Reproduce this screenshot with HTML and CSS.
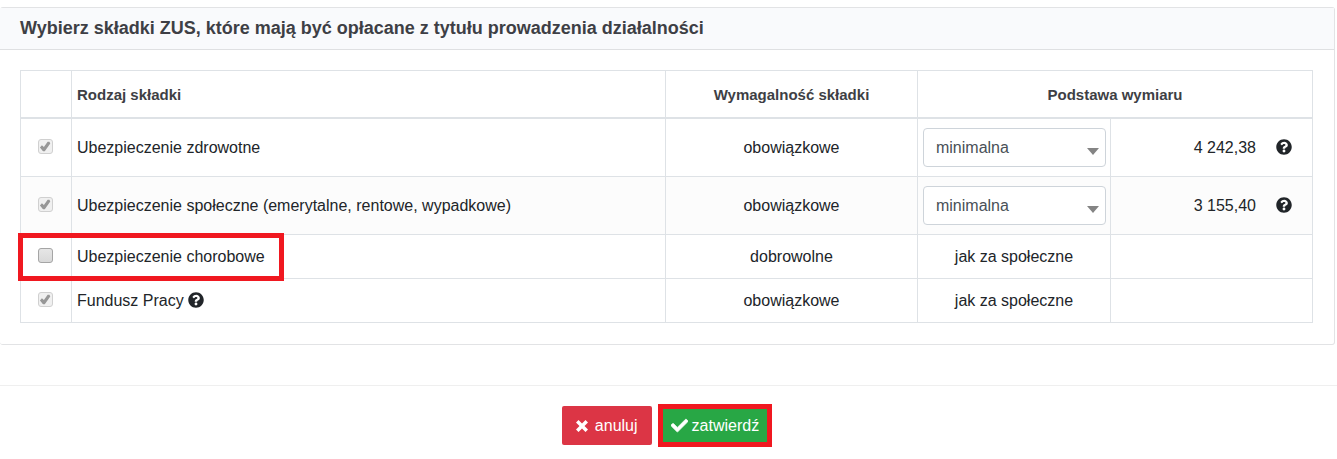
FILE: index.html
```
<!DOCTYPE html>
<html lang="pl">
<head>
<meta charset="utf-8">
<title>Składki ZUS</title>
<link rel="stylesheet" href="styles.css">
</head>
<body>
<svg class="sprite" aria-hidden="true">
  <symbol id="help" viewBox="0 0 512 512"><path d="M504 256c0 136.997-111.043 248-248 248S8 392.997 8 256C8 119.083 119.043 8 256 8s248 111.083 248 248zM262.655 90c-54.497 0-89.255 22.957-116.549 63.758-3.536 5.286-2.353 12.415 2.715 16.258l34.699 26.31c5.205 3.947 12.621 3.008 16.665-2.122 17.864-22.658 30.113-35.797 57.303-35.797 20.429 0 45.698 13.148 45.698 32.958 0 14.976-12.363 22.667-32.534 33.976C247.128 238.528 216 254.941 216 296v4c0 6.627 5.373 12 12 12h56c6.627 0 12-5.373 12-12v-1.333c0-28.462 83.186-29.647 83.186-106.667 0-58.002-60.165-102-116.531-102zM256 338c-25.365 0-46 20.635-46 46 0 25.364 20.635 46 46 46s46-20.636 46-46c0-25.364-20.635-46-46-46z"/></symbol>
</svg>
<form>
  <section class="card">
    <h1 class="card-header">Wybierz składki ZUS, które mają być opłacane z tytułu prowadzenia działalności</h1>
    <div class="card-body">
      <table class="table">
        <colgroup>
          <col class="col-check"><col><col class="col-due"><col class="col-base"><col class="col-amount">
        </colgroup>
        <thead>
          <tr>
            <th></th>
            <th class="left">Rodzaj składki</th>
            <th>Wymagalność składki</th>
            <th colspan="2">Podstawa wymiaru</th>
          </tr>
        </thead>
        <tbody>
          <tr>
            <td class="check-cell"><input class="check" type="checkbox" id="health" checked disabled></td>
            <td class="left"><label for="health">Ubezpieczenie zdrowotne</label></td>
            <td>obowiązkowe</td>
            <td><select class="select" aria-label="Podstawa wymiaru: zdrowotne"><option>minimalna</option></select></td>
            <td class="amount"><span>4 242,38</span><svg class="help" role="img" aria-label="Pomoc"><use href="#help"/></svg></td>
          </tr>
          <tr class="striped">
            <td class="check-cell"><input class="check" type="checkbox" id="social" checked disabled></td>
            <td class="left"><label for="social">Ubezpieczenie społeczne (emerytalne, rentowe, wypadkowe)</label></td>
            <td>obowiązkowe</td>
            <td><select class="select" aria-label="Podstawa wymiaru: społeczne"><option>minimalna</option></select></td>
            <td class="amount"><span>3 155,40</span><svg class="help" role="img" aria-label="Pomoc"><use href="#help"/></svg></td>
          </tr>
          <tr>
            <td class="check-cell"><input class="check" type="checkbox" id="sickness"><span class="marker"></span></td>
            <td class="left"><label for="sickness">Ubezpieczenie chorobowe</label></td>
            <td>dobrowolne</td>
            <td>jak za społeczne</td>
            <td></td>
          </tr>
          <tr>
            <td class="check-cell"><input class="check" type="checkbox" id="labour" checked disabled></td>
            <td class="left"><label for="labour">Fundusz Pracy</label> <svg class="help" role="img" aria-label="Pomoc"><use href="#help"/></svg></td>
            <td>obowiązkowe</td>
            <td>jak za społeczne</td>
            <td></td>
          </tr>
        </tbody>
      </table>
    </div>
  </section>
  <div class="actions">
    <button class="btn btn-cancel" type="button"><svg class="cross" viewBox="0 0 12 12" aria-hidden="true"><path d="M2.500 0 6 3.500 9.500 0 12 2.500 8.500 6 12 9.500 9.500 12 6 8.500 2.500 12 0 9.500 3.500 6 0 2.500z"/></svg>anuluj</button>
    <button class="btn btn-submit" type="button"><svg class="tick" viewBox="0 0 512 512" aria-hidden="true"><path d="M173.898 439.404l-166.4-166.4c-9.997-9.997-9.997-26.206 0-36.204l36.203-36.204c9.997-9.998 26.207-9.998 36.204 0L192 312.690 432.095 72.596c9.997-9.997 26.207-9.997 36.204 0l36.203 36.204c9.997 9.997 9.997 26.206 0 36.204l-294.400 294.401c-9.998 9.997-26.207 9.997-36.204-.001z" stroke="currentColor" stroke-width="20"/></svg>zatwierdź</button>
  </div>
</form>
</body>
</html>
```
FILE: styles.css
```
* {
  box-sizing: border-box;
}

body {
  margin: 0;
  background: #fff;
  color: #212529;
  font: 16px/25px "Liberation Sans", Arial, sans-serif;
}

.sprite {
  position: absolute;
  width: 0;
  height: 0;
}

.card {
  margin: 7px 2px 0 0;
  border: 1px solid #e2e3e5;
  border-left: 0;
  border-radius: 3px;
}

.card-header {
  margin: 0;
  padding: 8px 20px;
  border-bottom: 1px solid #dfe0e2;
  background: #f9fafc;
  color: #3e3f45;
  font-size: 18px;
  line-height: 25px;
}

.card-body {
  padding: 20px 21px 21px 20px;
}

.table {
  width: 100%;
  border-collapse: collapse;
  table-layout: fixed;
}

.col-check { width: 51px; }
.col-due { width: 252px; }
.col-base { width: 193px; }
.col-amount { width: 202px; }

.table th,
.table td {
  padding: 9px 5px;
  border: 1px solid #dee2e6;
  text-align: center;
  vertical-align: middle;
}

.table th {
  padding: 11px 5px 10px;
  border-bottom-width: 2px;
  color: #3e3f45;
  font-size: 15px;
}

.table .left {
  text-align: left;
}

.table .amount {
  padding-right: 20px;
  text-align: right;
}

.table .check-cell {
  position: relative;
  padding: 8px 6px 10px 4px;
}

.striped {
  background: #fcfcfc;
}

.check {
  appearance: none;
  display: block;
  width: 15px;
  height: 15px;
  margin: 0 auto;
  border: 1px solid #a5a5a5;
  border-radius: 3px;
  background: linear-gradient(#e6e6e6, #d9d9d9);
}

.check:disabled {
  border-color: #d0d0d0;
  background: #f0f0f0;
}

.check:checked::before {
  content: "";
  display: block;
  width: 11px;
  height: 11px;
  margin: 1px;
  background: #979797;
  clip-path: polygon(4% 58%, 22% 38%, 40% 54%, 74% 6%, 90% 6%, 98% 22%, 48% 94%, 32% 94%);
}

/* Frame laid over the row's first two cells */
.marker {
  position: absolute;
  top: -2px;
  left: -3px;
  width: 266px;
  height: 48px;
  border: 5px solid #f01820;
  pointer-events: none;
}

.select {
  appearance: none;
  display: block;
  width: 183px;
  height: 39px;
  padding: 0 12px;
  border: 1px solid #ced4da;
  border-radius: 4px;
  background: #fff url("data:image/svg+xml,%3Csvg xmlns='http://www.w3.org/2000/svg' width='12' height='7'%3E%3Cpath d='M0 0h12L6 7z' fill='%23848484'/%3E%3C/svg%3E") no-repeat right 6px top 19px;
  color: #495057;
  font: inherit;
}

.help {
  width: 16px;
  height: 16px;
  fill: #212529;
  vertical-align: -2px;
}

.amount .help {
  margin-left: 20px;
}

.actions {
  display: flex;
  align-items: center;
  justify-content: center;
  gap: 6px;
  margin-top: 40px;
  padding: 18px 3px 0 0;
  border-top: 1px solid #efefef;
}

.btn {
  display: flex;
  align-items: center;
  justify-content: center;
  border: 0;
  color: #fff;
  font: inherit;
}

.btn svg {
  fill: currentColor;
}

.btn-cancel {
  gap: 7px;
  height: 39px;
  padding: 0 14px;
  border-radius: 2px;
  background: #dc3545;
}

.btn-submit {
  gap: 4px;
  height: 43px;
  padding: 0 8px;
  border: 5px solid #f01820;
  background: #28a745;
}

.cross {
  width: 12px;
  height: 12px;
}

.tick {
  width: 17px;
  height: 17px;
}
```
